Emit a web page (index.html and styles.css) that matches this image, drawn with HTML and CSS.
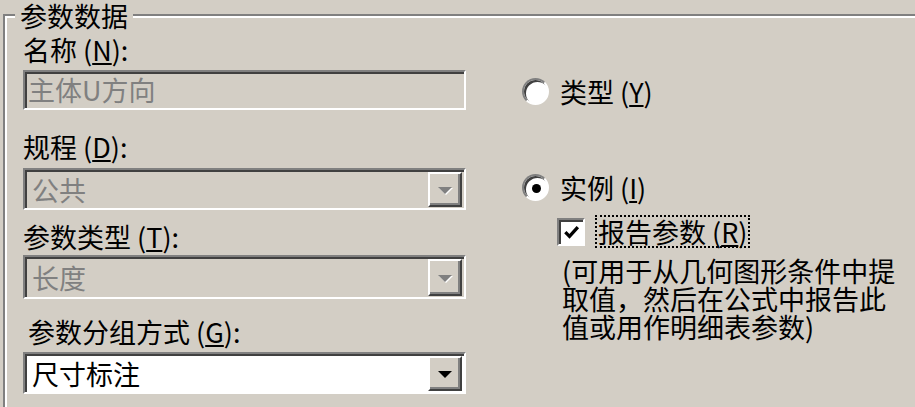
FILE: index.html
```html
<!DOCTYPE html>
<html lang="zh-CN">
<head>
  <meta charset="UTF-8">
  <title>参数属性</title>
  <link rel="stylesheet" href="styles.css">
</head>
<body>
  <fieldset class="group">
    <legend>参数数据</legend>
    <div class="cols">
      <div class="left">
        <div class="field f-name">
          <label>名称 (<u>N</u>):</label>
          <div class="textbox disabled">主体U方向</div>
        </div>
        <div class="field f-disc">
          <label>规程 (<u>D</u>):</label>
          <div class="combo disabled"><span class="value">公共</span><span class="drop"></span></div>
        </div>
        <div class="field f-type">
          <label>参数类型 (<u>T</u>):</label>
          <div class="combo disabled tall"><span class="value">长度</span><span class="drop"></span></div>
        </div>
        <div class="field f-group">
          <label class="indent">参数分组方式 (<u>G</u>):</label>
          <div class="combo"><span class="value">尺寸标注</span><span class="drop"></span></div>
        </div>
      </div>

      <div class="right">
        <div class="option opt-type"><span class="radio"></span><span>类型 (<u>Y</u>)</span></div>
        <div class="option opt-inst"><span class="radio checked"></span><span>实例 (<u>I</u>)</span></div>
        <div class="report">
          <span class="check">
            <svg viewBox="0 0 24 24" width="20" height="20"><path d="M4 11 L9 16 L19 5" fill="none" stroke="#000" stroke-width="4"/></svg>
          </span>
          <span class="focus">报告参数 (<u>R</u>)</span>
        </div>
        <p class="note">(可用于从几何图形条件中提取值，然后在公式中报告此值或用作明细表参数)</p>
      </div>
    </div>
  </fieldset>
</body>
</html>
```

FILE: styles.css
```css
:root {
  --face: #d3cec5;
  --shadow: #808080;
  --dark: #404040;
  --light: #fff;
}

* {
  box-sizing: border-box;
}

html, body {
  margin: 0;
}

body {
  background: var(--face);
  color: #000;
  font-family: "Noto Sans CJK SC", sans-serif;
  font-size: 27px;
  line-height: 27px;
  padding-left: 3px;
  height: 407px;
  overflow: hidden;
}

u {
  text-decoration-thickness: 2px;
  text-underline-offset: 2px;
}

/* group box */
.group {
  margin: 0;
  padding: 0;
  min-width: 0;
  height: 407px;
  border: solid var(--shadow);
  border-width: 2px 0 0 2px;
  box-shadow: inset 2px 2px 0 var(--light);
}

.group legend {
  margin-left: 10px;
  padding: 2px 5px 0;
  background: var(--face);
  line-height: 27px;
}

.cols {
  display: flex;
  gap: 56px;
  padding-left: 18px;
}

.left {
  width: 443px;
  flex: none;
}

.field label {
  display: block;
  height: 27px;
}

.field label.indent {
  padding-left: 5px;
}

.f-name { margin-top: 7px; }
.f-disc { margin-top: 23px; }
.f-type { margin-top: 13px; }
.f-group { margin-top: 19px; }

/* sunken edit / combo */
.textbox, .combo {
  border: 2px solid;
  border-color: var(--shadow) var(--light) var(--light) var(--shadow);
  box-shadow: inset 2px 2px 0 var(--dark);
  background: #fff;
}

.textbox {
  margin-top: 7px;
  height: 40px;
  line-height: 36px;
  padding-left: 3px;
}

.combo {
  margin-top: 8px;
  height: 42px;
  display: flex;
}

.combo.tall {
  margin-top: 5px;
  height: 44px;
}

.f-group .combo {
  margin-top: 7px;
}

.disabled {
  background: var(--face);
  color: var(--shadow);
}

.combo .value {
  flex: 1;
  padding-left: 7px;
  display: flex;
  align-items: center;
}

.drop {
  width: 34px;
  margin: 2px 2px 1px 0;
  background: var(--face);
  border: 2px solid;
  border-color: var(--light) var(--dark) var(--dark) var(--light);
  box-shadow: inset -2px -2px 0 var(--shadow);
  display: flex;
  align-items: center;
  justify-content: center;
}

.drop::after {
  content: "";
  border-left: 7px solid transparent;
  border-right: 7px solid transparent;
  border-top: 7px solid #000;
  margin: 2px 0 0 -1px;
}

.disabled .drop::after {
  border-top-color: var(--shadow);
  filter: drop-shadow(1px 1px 0 var(--light));
}

/* right column */
.right {
  flex: 1;
  padding-top: 49px;
}

.option {
  display: flex;
  align-items: center;
  gap: 11px;
  height: 27px;
}

.opt-inst {
  margin-top: 69px;
}

.radio {
  width: 27px;
  height: 27px;
  border-radius: 50%;
  background: #fff;
  border: 2px solid;
  border-color: var(--shadow) var(--light) var(--light) var(--shadow);
  box-shadow: inset 2px 2px 0 var(--dark);
  display: flex;
  align-items: center;
  justify-content: center;
}

.radio.checked::after {
  content: "";
  width: 9px;
  height: 9px;
  border-radius: 50%;
  background: #000;
  margin: 1px 0 0 1px;
}

.report {
  display: flex;
  align-items: center;
  gap: 10px;
  margin: 14px 0 0 35px;
  height: 33px;
}

.check {
  width: 28px;
  height: 28px;
  background: #fff;
  border: 2px solid;
  border-color: var(--shadow) var(--light) var(--light) var(--shadow);
  box-shadow: inset 2px 2px 0 var(--dark);
  display: flex;
  align-items: center;
  justify-content: center;
  padding: 2px 0 0 2px;
}

.focus {
  border: 2px dotted #000;
  padding: 1px 1px;
  height: 33px;
  line-height: 27px;
}

.note {
  margin: 9px 0 0 40px;
  width: 350px;
  line-height: 28px;
}
```
